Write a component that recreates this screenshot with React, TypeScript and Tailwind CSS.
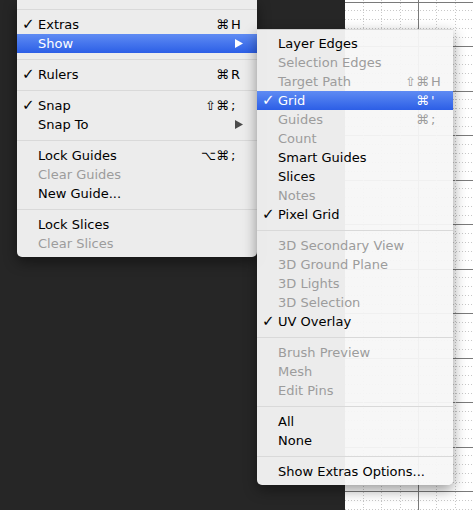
import React from 'react';

type Row =
  | { sep: true }
  | { sep?: false; label: string; on?: boolean; off?: boolean; hot?: boolean; mods?: string; k?: string; sub?: boolean };

const viewMenu: Row[] = [
  { sep: true },
  { label: 'Extras', on: true, mods: '⌘', k: 'H' },
  { label: 'Show', hot: true, sub: true },
  { sep: true },
  { label: 'Rulers', on: true, mods: '⌘', k: 'R' },
  { sep: true },
  { label: 'Snap', on: true, mods: '⇧⌘', k: ';' },
  { label: 'Snap To', sub: true },
  { sep: true },
  { label: 'Lock Guides', mods: '⌥⌘', k: ';' },
  { label: 'Clear Guides', off: true },
  { label: 'New Guide...' },
  { sep: true },
  { label: 'Lock Slices' },
  { label: 'Clear Slices', off: true },
];

const showMenu: Row[] = [
  { label: 'Layer Edges' },
  { label: 'Selection Edges', off: true },
  { label: 'Target Path', off: true, mods: '⇧⌘', k: 'H' },
  { label: 'Grid', on: true, hot: true, mods: '⌘', k: "'" },
  { label: 'Guides', off: true, mods: '⌘', k: ';' },
  { label: 'Count', off: true },
  { label: 'Smart Guides' },
  { label: 'Slices' },
  { label: 'Notes', off: true },
  { label: 'Pixel Grid', on: true },
  { sep: true },
  { label: '3D Secondary View', off: true },
  { label: '3D Ground Plane', off: true },
  { label: '3D Lights', off: true },
  { label: '3D Selection', off: true },
  { label: 'UV Overlay', on: true },
  { sep: true },
  { label: 'Brush Preview', off: true },
  { label: 'Mesh', off: true },
  { label: 'Edit Pins', off: true },
  { sep: true },
  { label: 'All' },
  { label: 'None' },
  { sep: true },
  { label: 'Show Extras Options...' },
];

function Arrow({ color }: { color: string }) {
  return (
    <svg width="8" height="9" viewBox="0 0 8 9" className="shrink-0">
      <polygon points="0,0 8,4.5 0,9" fill={color} />
    </svg>
  );
}

function MenuRows({ rows, keyPad }: { rows: Row[]; keyPad: string }) {
  return (
    <>
      {rows.map((r, i) => {
        if (r.sep) {
          return (
            <div key={i} className="h-[12px] flex items-center">
              <div className="h-px w-full bg-[#d9d9d9]" />
            </div>
          );
        }
        const color = r.hot ? 'text-white' : r.off ? 'text-[#9c9c9c]' : 'text-black';
        return (
          <div
            key={i}
            className={`relative h-[19px] flex items-center pl-[21px] ${keyPad} ${color} ${
              r.hot ? 'bg-gradient-to-b from-[#5f8bf3] to-[#2c5ee6]' : ''
            }`}
          >
            {r.on && <span className="absolute left-[5px] top-0 leading-[19px] text-[15px]">✓</span>}
            <span className="leading-[19px] whitespace-nowrap">{r.label}</span>
            {r.k && (
              <span className="ml-auto flex leading-[19px]">
                <span>{r.mods}</span>
                <span className="w-[14px] pl-[2px]">{r.k}</span>
              </span>
            )}
            {r.sub && (
              <span className="ml-auto flex items-center">
                <Arrow color={r.hot ? '#ffffff' : '#4a4a4a'} />
              </span>
            )}
          </div>
        );
      })}
    </>
  );
}

function CanvasGrid() {
  const vx = [-3, -2, -1, 0, 1, 2, 3].map((k) => 73 + 18.3 * k);
  const hy: { y: number; solid: boolean }[] = [];
  for (let k = -5; k <= 52; k++) hy.push({ y: 46 + 8.9 * k, solid: k % 5 === 0 });
  return (
    <svg width="128" height="510" className="block">
      <rect width="128" height="510" fill="#ffffff" />
      {hy.map((h, i) => (
        <line
          key={'h' + i}
          x1="0"
          x2="128"
          y1={Math.round(h.y) + 0.5}
          y2={Math.round(h.y) + 0.5}
          stroke={h.solid ? '#7a7a7a' : '#c8c8c8'}
          strokeDasharray={h.solid ? undefined : '1 2'}
        />
      ))}
      {vx.map((x, i) => (
        <line
          key={'v' + i}
          y1="0"
          y2="510"
          x1={Math.round(x) + 0.5}
          x2={Math.round(x) + 0.5}
          stroke={i === 3 ? '#7a7a7a' : '#c8c8c8'}
          strokeDasharray={i === 3 ? undefined : '1 2'}
        />
      ))}
    </svg>
  );
}

export default function App() {
  return (
    <div
      className="relative w-[473px] h-[510px] overflow-hidden flex text-[13px]"
      style={{ fontFamily: '"DejaVu Sans", "Liberation Sans", sans-serif' }}
    >
      <div className="w-[345px] h-full bg-[#262626]" />
      <div className="flex-1 h-full">
        <CanvasGrid />
      </div>

      {/* View menu */}
      <div className="absolute left-[17px] top-0 w-[240px] pt-[3px] pb-[4px] rounded-b-[5px] bg-[rgba(247,247,247,0.95)] shadow-[0_5px_14px_rgba(0,0,0,0.45)]">
        <MenuRows rows={viewMenu} keyPad="pr-[14px]" />
      </div>

      {/* Show submenu */}
      <div className="absolute left-[257px] top-[29px] w-[196px] py-[4px] rounded-b-[5px] border-t border-[rgba(0,0,0,0.12)] bg-[rgba(247,247,247,0.95)] shadow-[0_5px_14px_rgba(0,0,0,0.4)]">
        <MenuRows rows={showMenu} keyPad="pr-[10px]" />
      </div>
    </div>
  );
}
